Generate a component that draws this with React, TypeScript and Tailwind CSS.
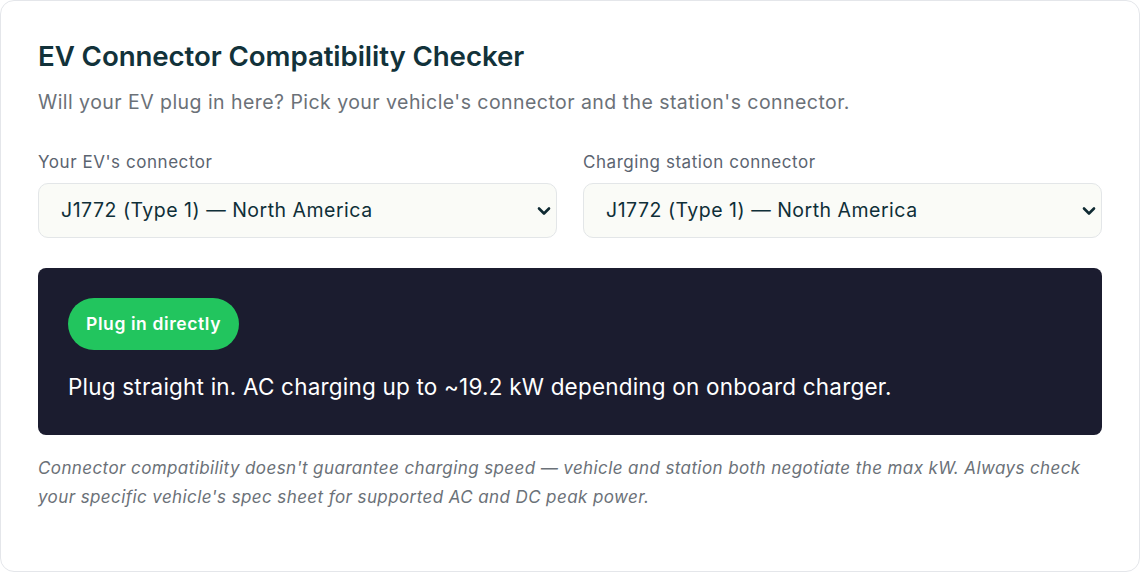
import React, { useState } from "react";

const CONNECTORS = [
  "J1772 (Type 1) — North America",
  "Type 2 (Mennekes) — Europe",
  "CCS1 — North America",
  "CCS2 — Europe",
  "NACS (Tesla) — North America",
  "CHAdeMO — Japan",
];

function Chevron() {
  return (
    <svg
      width="14"
      height="10"
      viewBox="0 0 14 10"
      fill="none"
      stroke="#0f2a33"
      strokeWidth="2.6"
      strokeLinecap="round"
      strokeLinejoin="round"
      className="pointer-events-none absolute right-[6px] top-1/2 -translate-y-1/2"
    >
      <path d="M2 2.5 7 7.5 12 2.5" />
    </svg>
  );
}

function ConnectorSelect({
  label,
  value,
  onChange,
}: {
  label: string;
  value: string;
  onChange: (v: string) => void;
}) {
  return (
    <label className="flex flex-col gap-[11px]">
      <span className="text-[17px] leading-[20px] tracking-[0.55px] text-[#5b6470]">{label}</span>
      <div className="relative">
        <select
          value={value}
          onChange={(e) => onChange(e.target.value)}
          className="h-[55px] w-full appearance-none rounded-[10px] border border-[#e3e6e8] bg-[#fafbf7] pl-[22px] pr-[40px] text-[19.5px] tracking-[0.5px] text-[#0f2f38] outline-none"
        >
          {CONNECTORS.map((c) => (
            <option key={c} value={c}>
              {c}
            </option>
          ))}
        </select>
        <Chevron />
      </div>
    </label>
  );
}

export default function App() {
  const [ev, setEv] = useState(CONNECTORS[0]);
  const [station, setStation] = useState(CONNECTORS[0]);

  return (
    <div className="min-h-[573px] bg-white font-['Inter',sans-serif]">
      <div className="h-[572px] w-[1140px] rounded-[14px] border border-[#e4e6ea] bg-white px-[37px] pt-[37px]">
        <h1 className="text-[27.7px] font-semibold leading-[36px] tracking-[-0.1px] text-[#12323a]">
          EV Connector Compatibility Checker
        </h1>
        <p className="mt-[15px] text-[19.5px] leading-[26px] tracking-[0.45px] text-[#6b7178]">
          Will your EV plug in here? Pick your vehicle's connector and the station's connector.
        </p>

        <div className="mt-[37px] grid grid-cols-2 gap-[26px]">
          <ConnectorSelect label="Your EV's connector" value={ev} onChange={setEv} />
          <ConnectorSelect label="Charging station connector" value={station} onChange={setStation} />
        </div>

        <div className="mt-[30px] rounded-[8px] bg-[#1b1c2f] px-[30px] pb-[33px] pt-[30px]">
          <span className="inline-flex h-[52px] items-center rounded-full bg-[#22c55e] px-[18px] text-[17.5px] font-semibold tracking-[0.6px] text-white">
            Plug in directly
          </span>
          <p className="mt-[22px] text-[22.5px] leading-[30px] tracking-[0.2px] text-white">
            Plug straight in. AC charging up to ~19.2 kW depending on onboard charger.
          </p>
        </div>

        <p className="mt-[19px] text-[17px] italic leading-[29px] tracking-[0.4px] text-[#6b7178]">
          Connector compatibility doesn't guarantee charging speed — vehicle and station both negotiate the max kW. Always check your specific vehicle's spec sheet for supported AC and DC peak power.
        </p>
      </div>
    </div>
  );
}
